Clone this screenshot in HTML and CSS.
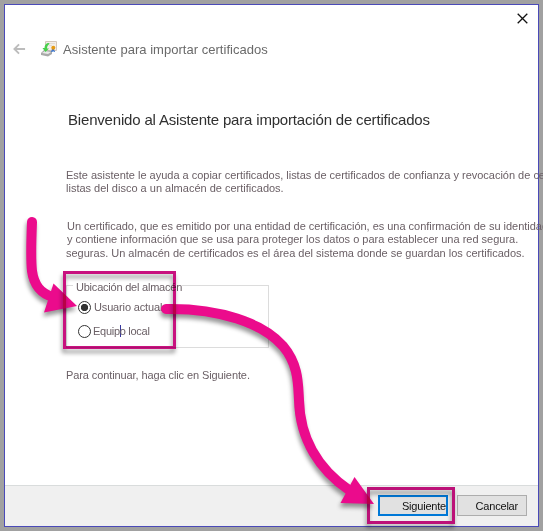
FILE: index.html
```html
<!DOCTYPE html>
<html lang="es">
<head>
<meta charset="utf-8">
<title>Asistente para importar certificados</title>
<link rel="stylesheet" href="styles.css">
</head>
<body>
<main class="window">
  <div class="titlebar">
    <svg class="close" viewBox="0 0 11 11"><path d="M.7.7l9.6 9.6M10.3.7L.7 10.3"/></svg>
  </div>
  <header class="header">
    <svg class="back" viewBox="0 0 14 12"><path d="M13 6H2M6.5 1L1.5 6l5 5"/></svg>
    <svg class="cert" viewBox="0 0 16 16">
      <path d="M4.5.5h11v9h-11z" fill="#f3eee9" stroke="#d3c6bc"/>
      <path d="M6 2.5h8M8 4.5h3" stroke="#e2ddd8"/>
      <path d="M0 12l3-3 8 1v3l-4 2.500-7-1.500z" fill="#a9a9a9"/>
      <path d="M1 12l3-2 6 1-3 2z" fill="#e9e9e9"/>
      <path d="M8 2C5 2 3.500 4 3.500 7H1.500L4.500 11 8 7.500H6C6 5 7 4 8.500 3z" fill="#48cf4c"/>
      <path d="M11 8l-1 3h1.500l.5-1 1 1h1l-1-3z" fill="#3f78cc"/>
      <circle cx="12.300" cy="6.800" r="2" fill="#e69a13"/>
    </svg>
    <span class="title">Asistente para importar certificados</span>
  </header>
  <section class="content">
    <h1 class="heading">Bienvenido al Asistente para importación de certificados</h1>
    <p class="para intro"><span class="line l1">Este asistente le ayuda a copiar certificados, listas de certificados de confianza y revocación de ce</span><span class="line l2">listas del disco a un almacén de certificados.</span></p>
    <p class="para detail"><span class="line l3">Un certificado, que es emitido por una entidad de certificación, es una confirmación de su identidad</span><span class="line l4">y contiene información que se usa para proteger los datos o para establecer una red segura.</span><span class="line l5">seguras. Un almacén de certificados es el área del sistema donde se guardan los certificados.</span></p>
    <div class="group">
      <div class="legend">Ubicación del almacén</div>
      <div class="option first"><span class="radio checked"></span><span class="user">Usuario actual</span></div>
      <div class="option"><span class="radio"></span><span class="local">Equi<span class="caret">p</span>o local</span></div>
    </div>
    <p class="hint">Para continuar, haga clic en Siguiente.</p>
  </section>
  <footer class="footer">
    <div class="button primary">Siguiente</div>
    <div class="button">Cancelar</div>
  </footer>
</main>
<svg class="marks" viewBox="0 0 543 531">
  <g class="shade">
    <path class="arrow" d="M32 222C31 246 31 262 32 271C34 285 40 293 53 297"/>
    <path class="head" d="M53.500 283.500L77 306L44 312.500z"/>
  </g>
  <g class="shade">
    <path class="arrow" d="M166 309C219 308 263 323 283 346C299 365 298 385 299 400C300 440 320 470 349 490"/>
    <path class="head" d="M354.500 477L374 504L340.500 503z"/>
  </g>
</svg>
<svg class="marks frames" viewBox="0 0 543 531">
  <g class="shade">
    <rect class="frame" x="64.500" y="272.500" width="110" height="75"/>
    <rect class="frame" x="368.500" y="488.500" width="85" height="34"/>
  </g>
</svg>
</body>
</html>
```

FILE: styles.css
```css
* { box-sizing: border-box; }
body {
  margin: 0;
  width: 543px;
  height: 531px;
  padding: 4px;
  overflow: hidden;
  background: #a1a1a1;
  font: 11px/13px "Liberation Sans", Arial, sans-serif;
  color: #6b6066;
}
.window {
  width: 535px;
  height: 523px;
  border: 1px solid #4a4ab8;
  background: #fff;
  display: flex;
  flex-direction: column;
}
.titlebar { height: 30px; padding: 8px 10px 0 0; display: flex; justify-content: flex-end; }
.close { width: 11px; height: 11px; fill: none; stroke: #111; stroke-width: 1.3; }
.header { height: 28px; padding-left: 8px; display: flex; align-items: center; }
.back { width: 13px; height: 12px; fill: none; stroke: #bcbcbc; stroke-width: 2; }
.cert { width: 16px; height: 16px; margin-left: 15px; }
.title { margin-left: 6px; font-size: 13px; letter-spacing: .03px; white-space: nowrap; color: #6a6a6a; }
.content { height: 422px; padding-left: 61px; }
.heading { margin: 47px 0 0 2px; font-size: 15px; line-height: 20px; font-weight: 400; letter-spacing: -.18px; white-space: nowrap; color: #303030; }
.para { margin: 0; white-space: nowrap; }
.line { display: block; width: max-content; }
.intro { margin-top: 39px; }
.l1 { letter-spacing: -.01px; }
.detail { margin-top: 25px; }
.l3 { margin-left: 1px; letter-spacing: -.02px; }
.l4 { margin-left: 1px; }
.l5 { margin-top: 1px; }
.group { width: 203px; height: 63px; margin-top: 25px; border: 1px solid #dcdcdc; }
.legend { width: max-content; padding: 0 0 0 3px; margin: -5px 0 0 6px; background: #fff; letter-spacing: -.22px; white-space: nowrap; }
.option { height: 14px; margin: 10px 0 0 11px; display: flex; align-items: center; gap: 3px; white-space: nowrap; }
.option.first { margin-top: 6px; }
.radio { width: 13px; height: 13px; border: 1px solid #333; border-radius: 50%; }
.checked { background: radial-gradient(circle, #333 3.3px, #fff 4px); }
.user { letter-spacing: -.15px; padding-top: 1px; }
.local { letter-spacing: -.28px; margin-left: -1px; }
.caret { border-right: 1px solid #35359c; margin-left: 0; margin-right: -1px; }
.hint { margin: 21px 0 0; letter-spacing: -.1px; white-space: nowrap; }
.footer {
  flex: 1;
  border-top: 1px solid #d9dcdc;
  background: #f0f0f0;
  padding: 9px 11px 0 0;
  display: flex;
  justify-content: flex-end;
  gap: 9px;
}
.button { width: 70px; height: 21px; padding: 0 8px 0 0; border: 1px solid #adadad; background: #e1e1e1; color: #111; text-align: right; line-height: 21px; letter-spacing: -.2px; }
.primary { border: 2px solid #0078d7; padding-right: 0; line-height: 19px; }
.marks { position: absolute; left: 0; top: 0; width: 543px; height: 531px; fill: none; }
.frames { mix-blend-mode: multiply; }
.frame { stroke: #c8127f; stroke-width: 3; }
.arrow { stroke: #eb0b8c; stroke-width: 10; stroke-linecap: round; }
.head { fill: #eb0b8c; }
.shade { filter: drop-shadow(-1px 4px 2px rgba(0, 0, 0, .4)); }
```
